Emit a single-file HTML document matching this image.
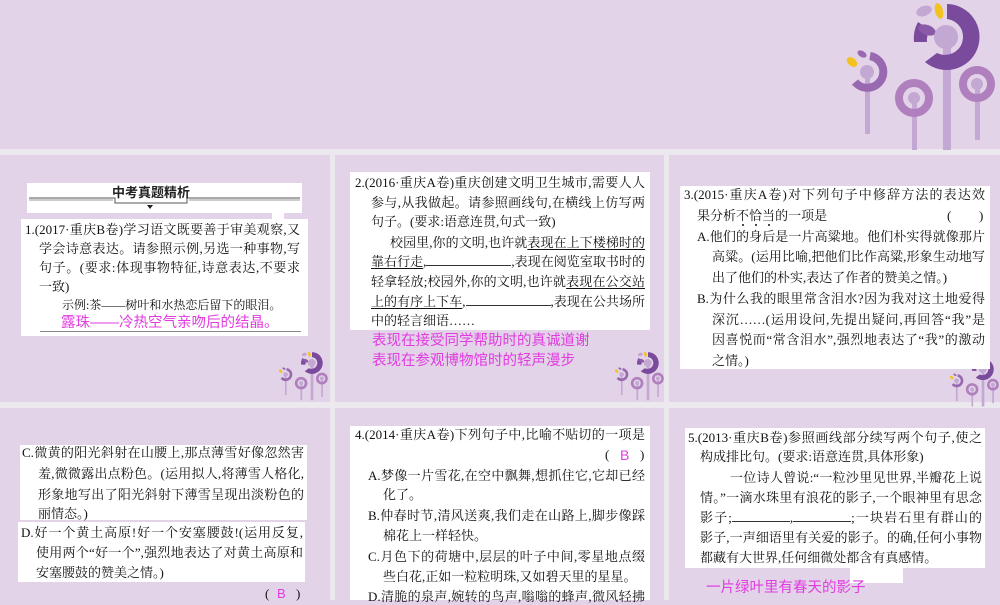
<!DOCTYPE html>
<html><head><meta charset="utf-8"><style>
*{margin:0;padding:0;box-sizing:border-box}
body{width:1000px;height:600px;overflow:hidden;background:#e3d3e8;position:relative;font-family:"Liberation Serif","Noto Serif CJK SC",serif;color:#111}
.sep{position:absolute;background:#ebe8ee}
.box{position:absolute;background:#fff}
.l{position:absolute;font-size:13px;line-height:16px;white-space:nowrap;height:16px;transform:translateY(-8px)}
.j{text-align:justify;text-align-last:justify;white-space:normal;overflow:hidden}
.pk{position:absolute;font-family:"Liberation Sans","Noto Sans CJK SC",sans-serif;color:#e13ce0;font-size:14.5px;line-height:18px;transform:translateY(-9px);white-space:nowrap}
u{text-decoration:underline;text-underline-offset:2px}
.bl{display:inline-block;border-bottom:1px solid #333;height:12px;vertical-align:baseline}
.d{position:relative;display:inline-block}
.d::after{content:"";position:absolute;left:50%;bottom:-2px;width:2px;height:2px;margin-left:-1px;background:#111;border-radius:50%}
</style></head><body>
<div class="sep" style="left:0;top:149px;width:1000px;height:6px"></div>
<div class="sep" style="left:0;top:402px;width:1000px;height:6px"></div>
<div class="sep" style="left:330px;top:149px;width:5px;height:451px"></div>
<div class="sep" style="left:664px;top:149px;width:5px;height:451px"></div>

<svg style="position:absolute;left:0;top:0" width="1000" height="600">
<defs>
<g id="fl">
<rect x="943" y="40" width="8" height="110" fill="#c3a8d3"/>
<path d="M947 4 A33 33 0 1 1 925 62 L937 53 A18 18 0 1 0 947 19 Z" fill="#7a4a9c"/>
<path d="M914 42 A33 33 0 0 1 918 22 L930 30 A18 18 0 0 0 927 42 Z" fill="#7a4a9c"/>
<ellipse cx="927" cy="30" rx="9" ry="5" fill="#8a5aa8" transform="rotate(20 927 30)"/>
<ellipse cx="924" cy="11" rx="8" ry="5" fill="#c3a8d3" transform="rotate(-20 924 11)"/>
<ellipse cx="939" cy="11" rx="4" ry="8" fill="#f2c220" transform="rotate(-15 939 11)"/>
<circle cx="946" cy="37" r="12" fill="#c3a8d3"/>
<rect x="865" y="72" width="5" height="62" fill="#c3a8d3"/>
<path d="M870 56 A16 16 0 1 1 855 82" fill="none" stroke="#9868b0" stroke-width="8"/>
<ellipse cx="852" cy="62" rx="6" ry="4" fill="#f2c220" transform="rotate(40 852 62)"/>
<ellipse cx="862" cy="54" rx="5" ry="3" fill="#9868b0" transform="rotate(30 862 54)"/>
<circle cx="867" cy="72" r="7" fill="#c3a8d3"/>
<rect x="912" y="98" width="5" height="52" fill="#c3a8d3"/>
<circle cx="914" cy="98" r="15" fill="none" stroke="#b07fbe" stroke-width="8"/>
<circle cx="914" cy="98" r="6" fill="#c3a8d3"/>
<rect x="975" y="83" width="5" height="57" fill="#c3a8d3"/>
<circle cx="977" cy="84" r="14" fill="none" stroke="#b07fbe" stroke-width="8"/>
<circle cx="977" cy="84" r="6" fill="#c3a8d3"/>
</g>
</defs>
<use href="#fl"/>
<g transform="translate(-0.5,350.8) scale(0.33)"><use href="#fl"/></g>
<g transform="translate(335.5,350.8) scale(0.33)"><use href="#fl"/></g>
<g transform="translate(670.5,357) scale(0.33)"><use href="#fl"/></g>
</svg>

<!-- Panel 1 -->
<div class="box" style="left:27px;top:183px;width:275px;height:30px"></div>
<svg style="position:absolute;left:27px;top:183px" width="275" height="30">
<path d="M2 15 H88 V20 H92" fill="none" stroke="#555" stroke-width="1"/>
<path d="M2 17 H86" stroke="#999" stroke-width="1"/>
<path d="M273 15 H160 V20 H156" fill="none" stroke="#555" stroke-width="1"/>
<path d="M273 17 H162" stroke="#999" stroke-width="1"/>
<path d="M92 20 H156" stroke="#555"/>
<path d="M120 22 l3 4 l3 -4z" fill="#222"/>
<text x="124" y="14" text-anchor="middle" font-family="Liberation Sans,Noto Sans CJK SC,sans-serif" font-weight="bold" font-size="13" fill="#222">中考真题精析</text>
</svg>
<div class="box" style="left:21px;top:219px;width:287px;height:117px"></div>
<div class="box" style="left:272px;top:212px;width:12px;height:8px"></div>
<div class="l j" style="left:25px;top:230px;width:275px">1.(2017·重庆B卷)学习语文既要善于审美观察,又要</div>
<div class="l j" style="left:39px;top:249px;width:261px">学会诗意表达。请参照示例,另选一种事物,写一个</div>
<div class="l j" style="left:39px;top:268px;width:261px">句子。(要求:体现事物特征,诗意表达,不要求句式</div>
<div class="l" style="left:39px;top:287px">一致)</div>
<div class="l" style="left:62px;top:305px;font-size:12px">示例:茶——树叶和水热恋后留下的眼泪。</div>
<div class="pk" style="left:61px;top:323px">露珠——冷热空气亲吻后的结晶。</div>
<div style="position:absolute;left:40px;top:331px;width:261px;height:1px;background:#888"></div>

<!-- Panel 2 -->
<div class="box" style="left:350px;top:172px;width:300px;height:158px"></div>
<div class="l j" style="left:355px;top:183px;width:290px">2.(2016·重庆A卷)重庆创建文明卫生城市,需要人人</div>
<div class="l j" style="left:371px;top:203px;width:274px">参与,从我做起。请参照画线句,在横线上仿写两个</div>
<div class="l" style="left:371px;top:222px">句子。(要求:语意连贯,句式一致)</div>
<div class="l j" style="left:390px;top:243px;width:255px">校园里,你的文明,也许就<u>表现在上下楼梯时的</u></div>
<div class="l j" style="left:371px;top:262px;width:274px"><u>靠右行走</u>,<span class="bl" style="width:85px"></span>,表现在阅览室取书时的</div>
<div class="l j" style="left:371px;top:282px;width:274px">轻拿轻放;校园外,你的文明,也许就<u>表现在公交站台</u></div>
<div class="l j" style="left:371px;top:302px;width:274px"><u>上的有序上下车</u>,<span class="bl" style="width:85px"></span>,表现在公共场所</div>
<div class="l" style="left:371px;top:321px">中的轻言细语……</div>
<div class="pk" style="left:372px;top:341px">表现在接受同学帮助时的真诚道谢</div>
<div class="pk" style="left:372px;top:361px">表现在参观博物馆时的轻声漫步</div>

<!-- Panel 3 -->
<div class="box" style="left:680px;top:186px;width:310px;height:183px"></div>
<div class="l j" style="left:684px;top:195px;width:301px">3.(2015·重庆A卷)对下列句子中修辞方法的表达效</div>
<div class="l" style="left:697px;top:216px">果分析<span class="d">不</span><span class="d">恰</span><span class="d">当</span>的一项是</div>
<div class="l" style="left:947px;top:216px">(</div><div class="l" style="left:979px;top:216px">)</div>
<div class="l j" style="left:697px;top:237px;width:288px">A.他们的身后是一片高粱地。他们朴实得就像那片</div>
<div class="l j" style="left:712px;top:257px;width:273px">高粱。(运用比喻,把他们比作高粱,形象生动地写</div>
<div class="l" style="left:712px;top:278px">出了他们的朴实,表达了作者的赞美之情。)</div>
<div class="l j" style="left:697px;top:299px;width:288px">B.为什么我的眼里常含泪水?因为我对这土地爱得</div>
<div class="l j" style="left:712px;top:320px;width:273px">深沉……(运用设问,先提出疑问,再回答“我”是</div>
<div class="l j" style="left:712px;top:340px;width:273px">因喜悦而“常含泪水”,强烈地表达了“我”的激动</div>
<div class="l" style="left:712px;top:361px">之情。)</div>

<!-- Panel 4 -->
<div class="box" style="left:20px;top:445px;width:287px;height:75px"></div>
<div class="box" style="left:18px;top:522px;width:287px;height:60px"></div>
<div class="l j" style="left:22px;top:453px;width:282px">C.微黄的阳光斜射在山腰上,那点薄雪好像忽然害了</div>
<div class="l j" style="left:38px;top:474px;width:266px">羞,微微露出点粉色。(运用拟人,将薄雪人格化,</div>
<div class="l j" style="left:38px;top:495px;width:266px">形象地写出了阳光斜射下薄雪呈现出淡粉色的美</div>
<div class="l" style="left:38px;top:514px">丽情态。)</div>
<div class="l j" style="left:21px;top:533px;width:282px">D.好一个黄土高原!好一个安塞腰鼓!(运用反复,</div>
<div class="l j" style="left:36px;top:553px;width:267px">使用两个“好一个”,强烈地表达了对黄土高原和</div>
<div class="l" style="left:36px;top:573px">安塞腰鼓的赞美之情。)</div>
<div class="l" style="left:265px;top:594px">(</div><div class="pk" style="left:277px;top:594px;font-size:13px">B</div><div class="l" style="left:296px;top:594px">)</div>

<!-- Panel 5 -->
<div class="box" style="left:350px;top:426px;width:300px;height:174px"></div>
<div class="l j" style="left:355px;top:435px;width:290px">4.(2014·重庆A卷)下列句子中,比喻<span class="d">不</span><span class="d">贴</span><span class="d">切</span>的一项是</div>
<div class="l" style="left:605px;top:455px">(</div><div class="pk" style="left:620px;top:455px;font-size:14px">B</div><div class="l" style="left:640px;top:455px">)</div>
<div class="l j" style="left:368px;top:476px;width:277px">A.梦像一片雪花,在空中飘舞,想抓住它,它却已经融</div>
<div class="l" style="left:383px;top:495px">化了。</div>
<div class="l j" style="left:368px;top:516px;width:277px">B.仲春时节,清风送爽,我们走在山路上,脚步像踩在</div>
<div class="l" style="left:383px;top:536px">棉花上一样轻快。</div>
<div class="l j" style="left:368px;top:557px;width:277px">C.月色下的荷塘中,层层的叶子中间,零星地点缀着</div>
<div class="l" style="left:383px;top:577px">些白花,正如一粒粒明珠,又如碧天里的星星。</div>
<div class="l j" style="left:368px;top:597px;width:277px">D.清脆的泉声,婉转的鸟声,嗡嗡的蜂声,微风轻拂树</div>

<!-- Panel 6 -->
<div class="box" style="left:685px;top:428px;width:300px;height:140px"></div>
<div class="box" style="left:850px;top:567px;width:53px;height:16px"></div>
<div class="l j" style="left:688px;top:438px;width:294px">5.(2013·重庆B卷)参照画线部分续写两个句子,使之</div>
<div class="l" style="left:700px;top:457px">构成排比句。(要求:语意连贯,具体形象)</div>
<div class="l j" style="left:730px;top:478px;width:252px">一位诗人曾说:“一粒沙里见世界,半瓣花上说人</div>
<div class="l j" style="left:700px;top:498px;width:282px">情。”一滴水珠里有浪花的影子,一个眼神里有思念的</div>
<div class="l j" style="left:700px;top:518px;width:282px">影子;<span class="bl" style="width:58px"></span>,<span class="bl" style="width:58px"></span>;一块岩石里有群山的</div>
<div class="l j" style="left:700px;top:538px;width:282px">影子,一声细语里有关爱的影子。的确,任何小事物</div>
<div class="l" style="left:700px;top:558px">都藏有大世界,任何细微处都含有真感情。</div>
<div class="pk" style="left:706px;top:588px">一片绿叶里有春天的影子</div>
</body></html>
